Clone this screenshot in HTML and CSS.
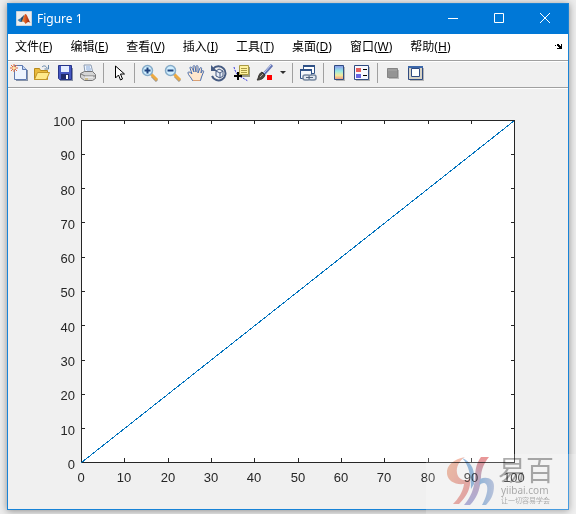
FILE: index.html
```html
<!DOCTYPE html>
<html lang="zh-CN">
<head>
<meta charset="utf-8">
<title>Figure 1</title>
<link rel="stylesheet" href="styles.css">
</head>
<body>
<main class="window">
  <header class="titlebar">
    <svg class="app-icon" viewBox="0 0 16 16" aria-hidden="true">
      <defs><linearGradient id="peak"><stop offset="0" stop-color="#f5a142"/><stop offset="0.5" stop-color="#d9531e"/><stop offset="1" stop-color="#7d1e16"/></linearGradient></defs>
      <path fill="#eeeeee" stroke="#c8d4de" d="M.5 .5h15v14H.5z"/>
      <path fill="#3d7fb5" d="M1.500 9l3.500-2 2-1 1-2-2 7-2 0z"/>
      <path fill="#234b70" d="M5 7l3-3-1 6-2 1z"/>
      <path fill="url(#peak)" d="M5 11c2-1 3-8 4.500-8s3 6 5 9c-2-2-3-1-5 1-1-2-2-3-4.500-2z"/>
    </svg>
    <h1 class="title">Figure 1</h1>
    <button class="caption-button" aria-label="最小化"><svg viewBox="0 0 12 12"><path d="M1 5.500h10"/></svg></button>
    <button class="caption-button" aria-label="最大化"><svg viewBox="0 0 12 12"><path d="M1.500 .5h9v9h-9z"/></svg></button>
    <button class="caption-button" aria-label="关闭"><svg viewBox="0 0 12 12"><path d="M1 0l10 10M11 0L1 10"/></svg></button>
  </header>
  <nav class="menubar">
    <button>文件(<u>F</u>)</button>
    <button>编辑(<u>E</u>)</button>
    <button>查看(<u>V</u>)</button>
    <button>插入(<u>I</u>)</button>
    <button>工具(<u>T</u>)</button>
    <button>桌面(<u>D</u>)</button>
    <button>窗口(<u>W</u>)</button>
    <button>帮助(<u>H</u>)</button>
    <button class="dock" aria-label="停靠"><svg viewBox="0 0 8 8" shape-rendering="crispEdges"><path d="M0 2h2v-1h2v1h1v1h1v-2h1v5h-5v-1h2v-1h-1v-1h-1v-1h-1v1h-1z"/></svg></button>
  </nav>
  <div class="toolbar" role="toolbar">
    <button aria-label="新建"><svg viewBox="0 0 18 18"><path fill="#8793a8" d="M6 17h12V6h-1v10H6z"/><path fill="#edf4ff" stroke="#5d79b0" d="M4.500 1.500h8l4 4v10h-12z"/><path fill="#c6d6f1" stroke="#5d79b0" d="M12.500 1.500v4h4"/><path stroke="#e4693b" d="M4 0v8M0 4h8M1 1l6 6M7 1L1 7"/><circle cx="4" cy="4" r="1.500" fill="#ffe5a0"/></svg></button>
    <button aria-label="打开"><svg viewBox="0 0 18 18"><path fill="#eaba3c" stroke="#b78a1c" d="M1.500 15.500v-11h5l1 2h7v9z"/><path fill="#ffe98a" stroke="#c4962a" d="M1.500 15.500l3-7h12l-3 7z"/><path fill="none" stroke="#6284aa" d="M9 3c2-2 4-1 5 1M15.500 1v4h-4"/></svg></button>
    <button aria-label="保存"><svg viewBox="0 0 18 18"><path fill="#8991a5" d="M4 4h13v13H4z"/><path fill="#4658c2" stroke="#27358a" d="M2.500 1.500h13v14h-12l-1-1z"/><path fill="#e5edff" d="M5 2h8v6H5z"/><path fill="#202b6c" d="M5 10h8v5H5z"/><path fill="#fff" d="M10 11h2v4h-2z"/></svg></button>
    <button aria-label="打印"><svg viewBox="0 0 18 18"><path fill="#eef5ff" stroke="#8d9cb2" d="M5 1h7l2 8H6z"/><path stroke="#88a9d8" d="M7 3h4M7 5h5M8 7h4"/><path fill="#d5d5d5" stroke="#777" d="M1.500 9.500l4-2h8l3 3v4l-3 2h-8l-4-3z"/><path fill="none" stroke="#777" d="M2 10l4 2h10"/><path stroke="#fff" d="M6 13h8"/><path stroke="#cda947" d="M6 15h3"/></svg></button>
    <span class="separator"></span>
    <button aria-label="编辑绘图"><svg viewBox="0 0 18 18"><path fill="#fff" stroke="#000" d="M5.500 2v12l3-3 2 5 2-1-2-5h4z"/></svg></button>
    <span class="separator"></span>
    <button aria-label="放大"><svg viewBox="0 0 18 18"><path stroke="#969696" stroke-width="3" d="M11 12l5 5"/><path stroke="#edaa42" stroke-width="3" d="M10 10l6 6"/><circle cx="6.500" cy="6.500" r="5" fill="#cfeeff" stroke="#86abc8" stroke-width="1.500"/><path stroke="#1f427e" stroke-width="2" d="M3.500 6.500h6M6.500 3.500v6"/></svg></button>
    <button aria-label="缩小"><svg viewBox="0 0 18 18"><path stroke="#969696" stroke-width="3" d="M11 12l5 5"/><path stroke="#edaa42" stroke-width="3" d="M10 10l6 6"/><circle cx="6.500" cy="6.500" r="5" fill="#cfeeff" stroke="#86abc8" stroke-width="1.500"/><path stroke="#1f427e" stroke-width="2" d="M3.500 6.500h6"/></svg></button>
    <button aria-label="平移"><svg viewBox="0 0 18 18"><path fill="#ffe7cd" stroke="#4b6fae" d="M5.500 16.500C4 13 1 11 1 9s2-1 4 1L3 4c0-2 2-1 3 2l1 2-1-5c0-2 2-2 2 0l1 5V3c0-2 2-2 2 0v6l2-5c1-1 2 0 1.500 1L14 9l1-2c1-1 2 0 1.500 1L14.500 13l-1 3.500z"/><path stroke="#d8a075" d="M6 16.500h7"/></svg></button>
    <button aria-label="旋转"><svg viewBox="0 0 18 18"><path fill="none" stroke="#465b82" stroke-width="2" d="M3 5a7 7 0 1 1-1 7"/><path fill="#465b82" d="M1 1v6h6z"/><path fill="#e6edf8" stroke="#465b82" d="M6 7l3-2 4 2v5l-3 2-4-2zM6 7l4 2 3-2M10 9v5"/></svg></button>
    <button aria-label="数据游标"><svg viewBox="0 0 18 18"><path fill="#9a9a86" d="M8 3h9v10H8z"/><path fill="#fff2a0" stroke="#aa9b43" d="M6.500 1.500h9v9h-9z"/><path stroke="#aa9b43" d="M8 4.500h6M8 6.500h6M8 8.500h6"/><path fill="none" stroke="#3939dd" stroke-dasharray="2 1" d="M1 3c1 4 3 9 7 10l7 4"/><path stroke="#000" stroke-width="2" d="M1 12h8M5 8v8"/></svg></button>
    <button aria-label="刷亮数据"><svg viewBox="0 0 18 18"><path stroke="#6273b4" stroke-width="3" d="M7 11l9-10"/><path stroke="#cdd8f5" d="M8 9l7-8"/><path fill="#4b4944" stroke="#35322f" d="M6 8l3 3c-1 4-5 5-8 5 2-2 1-6 5-8z"/><path stroke="#b5aaa0" d="M4 13l3-3"/><path fill="#f00" d="M11 11h5v5h-5z"/></svg></button>
    <button class="brush-menu" aria-label="刷亮选项"><svg viewBox="0 0 6 4"><path fill="#303030" d="M0 0h6L3 3z"/></svg></button>
    <span class="separator"></span>
    <button aria-label="链接绘图"><svg viewBox="0 0 18 18"><path fill="#fff" stroke="#305287" d="M4.500 1.500h11v8h-11z"/><path stroke="#305287" stroke-width="2" d="M4 2h12"/><path fill="#f4f7fc" stroke="#305287" d="M1.500 5.500h11v9h-11z"/><path stroke="#305287" stroke-width="2" d="M1 6h12"/><g fill="#dfe5ee" stroke="#76879f" stroke-width="1.500"><rect x="4" y="11" width="7" height="5" rx="2"/><rect x="10" y="11" width="7" height="5" rx="2"/></g><path stroke="#50627c" d="M7 13.500h7"/></svg></button>
    <span class="separator"></span>
    <button aria-label="颜色栏"><svg viewBox="0 0 18 18"><defs><linearGradient id="scale" x2="0" y2="1"><stop stop-color="#8794e9"/><stop offset=".4" stop-color="#97e9e5"/><stop offset=".7" stop-color="#f3ea9b"/><stop offset="1" stop-color="#ee9582"/></linearGradient></defs><path fill="#b5b5b5" d="M6 3h9v14H6z"/><path fill="url(#scale)" stroke="#304c82" d="M4.500 1.500h9v14h-9z"/></svg></button>
    <button aria-label="图例"><svg viewBox="0 0 18 18"><path fill="#b5b5b5" d="M3 3h14v14H3z"/><path fill="#f7f9ff" stroke="#304c82" d="M1.500 1.500h14v14h-14z"/><path fill="#e5605e" d="M3 4h5v4H3z"/><path fill="#6666e4" d="M3 10h5v4H3z"/><path stroke="#000" d="M10 5.500h4M10 11.500h4"/></svg></button>
    <span class="separator"></span>
    <button aria-label="隐藏绘图工具"><svg viewBox="0 0 18 18"><path fill="#b9b9b9" d="M5 6h10v9H5z"/><path fill="#949494" stroke="#858585" d="M3.500 4.500h10v9h-10z"/><path stroke="#a9a9a9" d="M4 6h9"/></svg></button>
    <button aria-label="显示绘图工具"><svg viewBox="0 0 18 18"><path fill="#b5b5b5" d="M3 4h14v13H3z"/><path fill="#d7d3c7" stroke="#304c82" d="M1.500 2.500h14v13h-14z"/><path stroke="#3d68aa" stroke-width="2" d="M1 3h15"/><path fill="#fff" stroke="#304c82" d="M4.500 4.500h8v8h-8z"/></svg></button>
  </div>
  <section class="figure" aria-label="绘图">
    <svg class="plot" viewBox="8 89 560 420">
      <g shape-rendering="crispEdges">
        <path fill="#fff" stroke="#262626" d="M81.500 120.500h433v342h-433z"/>
        <path stroke="#262626" d="M124.500 462v-4M168.500 462v-4M211.500 462v-4M254.500 462v-4M298.500 462v-4M341.500 462v-4M384.500 462v-4M428.500 462v-4M471.500 462v-4M124.500 121v3M168.500 121v3M211.500 121v3M254.500 121v3M298.500 121v3M341.500 121v3M384.500 121v3M428.500 121v3M471.500 121v3"/>
        <path stroke="#262626" d="M82 428.500h3M82 394.500h3M82 360.500h3M82 325.500h3M82 291.500h3M82 257.500h3M82 222.500h3M82 188.500h3M82 154.500h3M514 428.500h-3M514 394.500h-3M514 360.500h-3M514 325.500h-3M514 291.500h-3M514 257.500h-3M514 222.500h-3M514 188.500h-3M514 154.500h-3"/>
        <path stroke="#0072bd" d="M81.500 462.500L514.500 120.500"/>
      </g>
      <g class="y-labels">
        <text x="75" y="126">100</text><text x="75" y="160">90</text><text x="75" y="195">80</text><text x="75" y="229">70</text><text x="75" y="263">60</text><text x="75" y="297">50</text><text x="75" y="332">40</text><text x="75" y="366">30</text><text x="75" y="400">20</text><text x="75" y="435">10</text><text x="75" y="469">0</text>
      </g>
      <g class="x-labels">
        <text x="81" y="482">0</text><text x="124" y="482">10</text><text x="168" y="482">20</text><text x="211" y="482">30</text><text x="254" y="482">40</text><text x="298" y="482">50</text><text x="341" y="482">60</text><text x="384" y="482">70</text><text x="428" y="482">80</text><text x="471" y="482">90</text><text x="514" y="482">100</text>
      </g>
    </svg>
  </section>
</main>
<aside class="watermark">
  <svg class="mark" viewBox="0 0 52 52" aria-hidden="true">
    <defs>
      <linearGradient id="warm" x2="1" y2="1"><stop stop-color="#f5bd9f"/><stop offset="1" stop-color="#e8979b"/></linearGradient>
      <linearGradient id="ribbon" x2="0" y2="1"><stop stop-color="#e78382"/><stop offset=".4" stop-color="#c0a0bb"/><stop offset="1" stop-color="#a9aadb"/></linearGradient>
      <linearGradient id="cool" x2="1"><stop stop-color="#88b3dd"/><stop offset="1" stop-color="#b6c3e1"/></linearGradient>
    </defs>
    <path fill="url(#warm)" d="M19 1C8 3 0 9 1 18c1 7 8 11 17 10-1 8-6 15-11 20h6c8-8 12-16 11-25-6 3-12 0-13-6-1-6 2-12 8-16z"/>
    <path fill="url(#ribbon)" d="M35 1h8c-5 6-8 13-8 21-1 13-5 21-11 27h-6c7-8 10-16 11-27 0-9 2-16 6-21z"/>
    <path fill="#88b3dd" d="M16 2c8 3 12 10 12 18v8l-3 5c0-13-2-24-9-31z"/>
    <path fill="url(#cool)" d="M34 23c7-3 14 0 14 7 0 8-3 14-8 19h-4c5-8 8-21 2-22-2 0-4 1-5 3z"/>
  </svg>
  <div class="brand"><span class="brand-name">易百</span><span class="brand-url">yiibai.com</span><span class="brand-slogan">让一切容易学会</span></div>
</aside>
</body>
</html>
```
FILE: styles.css
```css
* { box-sizing: border-box; }
body {
  margin: 0;
  min-height: 100vh;
  padding: 3px 7px 4px;
  position: relative;
  display: flex;
  overflow: hidden;
  background: #ececec;
  font: 12px/16px "Noto Sans", "Noto Sans CJK SC", sans-serif;
  color: #000;
}
button { border: 0; padding: 0; background: none; font: inherit; color: inherit; }
svg { display: block; fill: none; }
.window {
  flex: 1;
  display: flex;
  flex-direction: column;
  border: 1px solid #1883d7;
  background: #f0f0f0;
  box-shadow: 0 1px 7px #00000066;
}
.titlebar {
  height: 30px;
  padding-left: 8px;
  display: flex;
  align-items: center;
  background: #0078d7;
  color: #fff;
}
.app-icon { width: 16px; height: 16px; }
.title { flex: 1; margin: 0 0 0 5px; font-size: 12px; font-weight: 400; }
.caption-button { width: 46px; height: 30px; display: grid; place-items: center; }
.caption-button svg { width: 12px; height: 12px; stroke: #fff; }
.menubar { height: 26px; padding: 0 5px 0 7px; display: flex; align-items: center; gap: 18px; background: #fff; }
.menubar u { text-underline-offset: 1px; }
.dock { margin-left: auto; }
.dock svg { width: 8px; height: 8px; fill: #000; }
.toolbar {
  height: 29px;
  display: flex;
  align-items: center;
  border-top: 1px solid #a0a0a0;
  border-bottom: 1px solid #fff;
  box-shadow: inset 0 1px #fff, inset 0 -1px #a0a0a0;
  padding-bottom: 3px;
}
.toolbar button { width: 23px; height: 22px; padding-right: 1px; display: grid; place-items: center; }
.toolbar svg { width: 18px; height: 18px; }
.toolbar .brush-menu { width: 12px; }
.toolbar .brush-menu svg { width: 6px; height: 4px; }
.separator { width: 1px; height: 20px; margin: 0 4px 0 3px; background: #a0a0a0; }
.figure { flex: 1; background: #f0f0f0; }
.plot { width: 100%; }
.plot text { fill: #262626; font: 13px "Liberation Sans", Arial, sans-serif; }
.y-labels { text-anchor: end; }
.x-labels { text-anchor: middle; }
.watermark {
  position: absolute;
  right: 0;
  bottom: 0;
  width: 150px;
  height: 60px;
  padding: 2px 0 0 20px;
  display: flex;
  background: #ffffff26;
  color: #00000052;
}
.mark, .brand { mix-blend-mode: multiply; }
.watermark { background: none; }
.watermark::before { content: ""; position: absolute; inset: 0; background: #ffffff33; }
.mark { width: 52px; height: 52px; opacity: .85; }
.brand { display: flex; flex-direction: column; white-space: nowrap; }
.brand-name { font-size: 28px; line-height: 28px; }
.brand-url { padding-left: 3px; font-size: 10px; line-height: 12px; }
.brand-slogan { padding-left: 3px; font-size: 7px; line-height: 10px; }
```
